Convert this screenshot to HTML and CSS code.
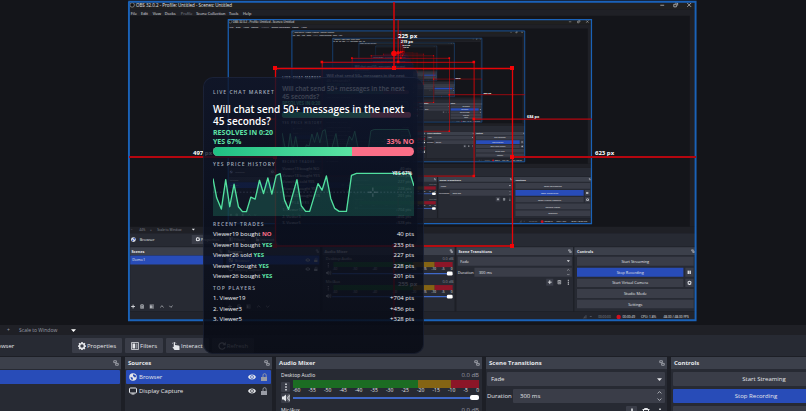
FILE: index.html
```html
<!DOCTYPE html>
<html lang="en">
<head>
<meta charset="utf-8">
<title>OBS Studio</title>
<link rel="stylesheet" href="styles.css">
</head>
<body>
<svg class="defs" aria-hidden="true">
  <defs>
    <symbol id="i-gear" viewBox="0 0 16 16"><path fill="currentColor" fill-rule="evenodd" d="M6.600 0h2.800l.5 2 1.300.6L13 1.500l1.800 1.800-1 1.800.5 1.300 1.700.5v2.600l-1.800.5-.5 1.400 1 1.700-1.900 1.900-1.700-1-1.300.5-.5 2H6.600l-.5-2-1.300-.5-1.800 1-1.900-1.900 1-1.700-.5-1.400L0 9.500V6.900l1.700-.5.5-1.300-1-1.800L3 1.500l1.800 1.100L6.100 2zM8 4.600a3.400 3.400 0 1 0 0 6.800 3.400 3.400 0 0 0 0-6.800z"/></symbol>
    <symbol id="i-filter" viewBox="0 0 16 16"><path fill="none" stroke="currentColor" stroke-width="1.500" d="M1 1h14v14H1z"/><path fill="currentColor" d="M3 3h5v10H3z"/><path fill="currentColor" opacity=".45" d="M9 3h4v10H9z"/></symbol>
    <symbol id="i-hand" viewBox="0 0 16 16"><path fill="currentColor" d="M4.500 0a1.500 1.500 0 0 1 1.500 1.500V6l7 1.200c1.200.2 2 1 2 2V16H5L1 10.500l1-1 1.500 1V1.500A1.500 1.500 0 0 1 4.500 0z"/><path fill="none" stroke="currentColor" d="M1 4a4 4 0 0 1 1-3M8 4a4 4 0 0 0-1-3"/></symbol>
    <symbol id="i-refresh" viewBox="0 0 16 16"><path fill="none" stroke="currentColor" stroke-width="2.200" d="M14 10.500A6.300 6.300 0 1 1 12.500 3.500"/><path fill="currentColor" d="M15.500 0v6.500H9z"/></symbol>
    <symbol id="i-dock" viewBox="0 0 16 16"><path fill="none" stroke="currentColor" stroke-width="2" d="M2 2h7v5H2zM7 9h7v5H7z"/></symbol>
    <symbol id="i-globe" viewBox="0 0 16 16"><circle cx="8" cy="8" r="7.500" fill="currentColor"/><path fill="var(--globe-land)" d="M8 2.500l5 1.500 1 4-3 1-1-2-2-.5zM3 8l4 1 1 3-1.500 2L4 12z"/></symbol>
    <symbol id="i-screen" viewBox="0 0 16 16"><rect x="1" y="2" width="14" height="10" rx="2" fill="none" stroke="currentColor" stroke-width="2"/><path fill="currentColor" d="M5 13h6v2H5z"/></symbol>
    <symbol id="i-eye" viewBox="0 0 16 16"><path fill="currentColor" fill-rule="evenodd" d="M0 8c2-3.500 5-5 8-5s6 1.500 8 5c-2 3.500-5 5-8 5s-6-1.500-8-5zm8-3.500a3.500 3.500 0 1 0 0 7 3.500 3.500 0 0 0 0-7z"/><circle cx="8" cy="8" r="2" fill="currentColor"/></symbol>
    <symbol id="i-lock" viewBox="0 0 16 16"><path fill="none" stroke="currentColor" stroke-width="1.800" d="M6 8V4.500a3.200 3.200 0 0 1 6.400 0V8"/><path fill="currentColor" d="M2 8h12v8H2z"/></symbol>
    <symbol id="i-dots" viewBox="0 0 16 16"><path fill="currentColor" d="M6.500 1h3v3h-3zM6.500 6.500h3v3h-3zM6.500 12h3v3h-3z"/></symbol>
    <symbol id="i-speaker" viewBox="0 0 16 16"><path fill="currentColor" d="M0 5h3l5-4v14l-5-4H0z"/><path fill="none" stroke="currentColor" stroke-width="1.600" d="M10 5q2 3 0 6M12 3q4 5 0 10M14 1q5 7 0 14"/></symbol>
    <symbol id="i-plus" viewBox="0 0 16 16"><path stroke="currentColor" stroke-width="3" d="M8 1v14M1 8h14"/></symbol>
    <symbol id="i-trash" viewBox="0 0 16 16"><path fill="none" stroke="currentColor" stroke-width="2" d="M1 3h14M5 2V1h6v1M3 4v11h10V4M6.500 6v7M9.500 6v7"/></symbol>
    <symbol id="i-up" viewBox="0 0 16 16"><path fill="none" stroke="currentColor" stroke-width="2.200" d="M2 11l6-6 6 6"/></symbol>
    <symbol id="i-down" viewBox="0 0 16 16"><path fill="none" stroke="currentColor" stroke-width="2.200" d="M2 5l6 6 6-6"/></symbol>
    <symbol id="i-caret" viewBox="0 0 16 16"><path fill="currentColor" d="M0 4h16l-8 9z"/></symbol>
    <symbol id="i-pause" viewBox="0 0 16 16"><path fill="currentColor" d="M1 1h6v14H1zM9 1h6v14H9z"/></symbol>
    <linearGradient id="glass" x1="0" y1="0" x2="0" y2="1"><stop offset="0" stop-color="#101830"/><stop offset="1" stop-color="#080c18"/></linearGradient>
    <linearGradient id="yes"><stop offset="0" stop-color="#1fbf83"/><stop offset="1" stop-color="#5be3a3"/></linearGradient>
    <symbol id="chart" viewBox="39 290 601 133" preserveAspectRatio="none">
      <path fill="#34d399" fill-opacity=".2" d="M39 310L50 368 64 402 77 313 89 395 102 327 115 395 127 410H139L152 366 165 372 178 315 190 355 203 308 215 357 228 300 240 295 253 375 265 403 290 313 303 392 316 409H328L353 325 365 345 378 302 391 370 403 400 416 409H438L453 300 468 294H628L640 332V423H39z"/>
      <path fill="none" stroke="#9fb0c8" stroke-opacity=".3" stroke-width="2" stroke-dasharray="5 5" d="M39 351H640"/>
      <path fill="none" stroke="#aab4c4" stroke-opacity=".5" stroke-width="2" d="M517 337v10M517 355v10M503 351h10M521 351h10"/>
      <path fill="none" stroke="#52e09f" stroke-width="4" stroke-linejoin="round" d="M39 310L50 368 64 402 77 313 89 395 102 327 115 395 127 410H139L152 366 165 372 178 315 190 355 203 308 215 357 228 300 240 295 253 375 265 403 290 313 303 392 316 409H328L353 325 365 345 378 302 391 370 403 400 416 409H438L453 300 468 294H628L640 332"/>
    </symbol>

    <!-- Selection box with its spacing guides -->
    <g id="selection" fill="none">
      <path stroke="#b5060f" stroke-width="2" d="M129 157H275M512 157H696"/>
      <path stroke="#d90509" stroke-width="1.500" d="M394 2V68M394 246V320"/>
      <path stroke="#e80407" stroke-width="1.300" d="M275.500 68.500H512.500V246H275.500z"/>
      <path fill="#f40407" d="M273 66h4v4h-4zM510 66h4v4h-4zM392 66h4v4h-4zM273 244h4v4h-4zM510 244h4v4h-4zM392 244h4v4h-4zM273 155h4v4h-4zM510 155h4v4h-4z"/>
      <circle cx="394" cy="53.500" r="2.800" fill="#f40407"/>
    </g>
  </defs>
</svg>

<main class="app">
  <section class="stage" aria-label="Preview">
    <svg class="preview" viewBox="-27 0 886 325">
      <g transform="matrix(.641 0 0 .641 145.600 18.400)">
        <g id="window" class="shot">
          <path fill="#14151a" d="M-27-27H859V472H-27z"/>
          <path fill="#202020" d="M-27-27H859V-14H-27z"/>
          <path fill="#1f2026" d="M-27-14H859V-4H-27zM849-4H859V325H849z"/>
          <circle cx="-21" cy="-21" r="3.500" fill="#111" stroke="#aaa"/>
          <text x="-15" y="-18" class="caption">OBS 32.0.2 - Profile: Untitled - Scenes: Untitled</text>
          <path fill="none" stroke="#ddd" d="M803-20.500h6M824-22h4v4h-4zM826-24h4v4M845-24l6 6M851-24l-6 6"/>
          <text x="-23" y="-6">File</text><text x="-7" y="-6">Edit</text><text x="11" y="-6">View</text><text x="30" y="-6">Docks</text><text x="55" y="-6" class="off">Profile</text><text x="79" y="-6">Scene Collection</text><text x="130" y="-6">Tools</text><text x="152" y="-6">Help</text>
          <path fill="#1f2026" d="M-27 325H859V335H-27z"/>
          <path fill="#272a33" d="M-27 335H859V357H-27z"/>
          <path fill="#1d1f26" d="M-27 356H859V460H-27z"/>
          <path fill="#22242c" d="M-27 458H859V472H-27z"/>
          <g class="zoom"><text x="-23" y="332" class="off">−</text><text x="-10" y="332" class="off">44%</text><text x="7" y="332" class="off">+</text><text x="18" y="332" class="off">Scale to Window</text></g>
          <use href="#i-caret" x="72" y="327" width="5" height="5"/>
          <use href="#i-globe" x="-23" y="341" width="8" height="8"/><text x="-9" y="348">Browser</text>
          <path fill="#3a3d48" d="M72 338h49v14H72zM124 338h38v14h-38zM165 338h45v14h-45z"/>
          <use href="#i-gear" x="78" y="341" width="7" height="7"/><text x="86" y="348">Properties</text><use href="#i-filter" x="130" y="341" width="7" height="7"/><text x="138" y="348">Filters</text><use href="#i-hand" x="171" y="341" width="7" height="7"/><text x="179" y="348">Interact</text>
          <path fill="#272a33" d="M-24 357H121V457H-24zM125 357H272V457H125zM276 357H482V457H276zM485 357H667V457H485zM669 357H859V457H669z"/>
          <path fill="#3c404b" d="M-24 357H121V369H-24zM125 357H272V369H125zM276 357H482V369H276zM485 357H667V369H485zM669 357H859V369H669z"/>
          <g class="strong"><text x="-22" y="366">Scenes</text><text x="128" y="366">Sources</text><text x="279" y="366">Audio Mixer</text><text x="488" y="366">Scene Transitions</text><text x="673" y="366">Controls</text></g>
          <use href="#i-dock" x="114" y="360" width="6" height="6"/><use href="#i-dock" x="265" y="360" width="6" height="6"/><use href="#i-dock" x="474" y="360" width="6" height="6"/><use href="#i-dock" x="659" y="360" width="6" height="6"/><use href="#i-dock" x="851" y="360" width="6" height="6"/>
          <path fill="#284cb8" d="M-24 370H121V384H-24zM126 370H271V384H126z"/>
          <text x="-21" y="379">Demo1</text>
          <use href="#i-globe" x="129" y="373" width="8" height="8"/><text x="139" y="380">Browser</text>
          <use href="#i-screen" x="129" y="387" width="8" height="8"/><text x="139" y="394">Display Capture</text>
          <use href="#i-eye" x="249" y="373" width="8" height="8"/><use href="#i-eye" x="249" y="387" width="8" height="8"/><use href="#i-lock" x="262" y="373" width="7" height="7"/><use href="#i-lock" x="262" y="387" width="7" height="7"/>
          <g id="shot-tools"><use href="#i-plus" x="-23" y="446" width="7" height="7"/><use href="#i-trash" x="-9" y="446" width="7" height="7"/><use href="#i-filter" x="6" y="446" width="7" height="7"/><use href="#i-up" x="22" y="446" width="7" height="7"/><use href="#i-down" x="36" y="446" width="7" height="7"/></g>
          <use href="#shot-tools" x="151"/>
          <g id="channel"><text x="463" y="377" class="off">0.0 dB</text>
            <path fill="#1c6c23" d="M293 380H417V388H293z"/><path fill="#846414" d="M417 380H451V388H417z"/><path fill="#8c1628" d="M451 380H479V388H451z"/>
            <use href="#i-dots" x="281" y="381" width="8" height="8"/><use href="#i-speaker" x="281" y="393" width="9" height="8"/>
            <text x="292" y="393" class="tick">-60</text><text x="323" y="393" class="tick">-50</text><text x="354" y="393" class="tick">-40</text><text x="385" y="393" class="tick">-30</text><text x="415" y="393" class="tick">-20</text><text x="431" y="393" class="tick">-15</text><text x="446" y="393" class="tick">-10</text><text x="462" y="393" class="tick">-5</text><text x="476" y="393" class="tick">0</text>
            <path stroke="#3f68c8" stroke-width="2" d="M291 398H470"/><rect x="470" y="395" width="9" height="6" rx="2" fill="#fff"/></g>
          <use href="#channel" y="36"/><text x="281" y="377">Desktop Audio</text><text x="281" y="413">Mic/Aux</text>
          <path fill="#3a3d48" d="M487 372H665V386H487zM513 389H665V403H513zM625 406h11v11h-11z"/>
          <text x="491" y="382">Fade</text><text x="487" y="399">Duration</text><text x="520" y="399">300 ms</text>
          <use href="#i-caret" x="657" y="376" width="5" height="5"/><use href="#i-up" x="657" y="390" width="5" height="5"/><use href="#i-down" x="657" y="397" width="5" height="5"/>
          <use href="#i-plus" x="627" y="408" width="7" height="7"/><use href="#i-trash" x="642" y="408" width="7" height="7"/><use href="#i-dots" x="655" y="407" width="9" height="9"/>
          <path fill="#3a3d48" d="M673 372H855V386H673zM842 389h13v14h-13zM673 406H839V419H673zM842 406h13v13h-13zM673 422H855V436H673zM673 439H855V452H673z"/>
          <path fill="#284cb8" d="M673 389H839V403H673z"/>
          <g text-anchor="middle"><text x="764" y="382">Start Streaming</text><text x="756" y="399">Stop Recording</text><text x="756" y="415">Start Virtual Camera</text><text x="764" y="432">Studio Mode</text><text x="764" y="448">Settings</text></g>
          <use href="#i-pause" x="845" y="393" width="6" height="6"/><use href="#i-gear" x="845" y="409" width="7" height="7"/>
          <path stroke="#666b77" d="M683 468v-1M685 468v-3M687 468v-5M693 465h3"/>
          <circle cx="738" cy="466" r="3.500" fill="#cf1020"/>
          <g class="status"><text x="706" y="468" class="off">00:00:00</text><text x="744" y="468">00:00:49</text><text x="773" y="468">CPU: 1.8%</text><text x="808" y="468">48.00 / 48.00 FPS</text></g>
          <path fill="none" stroke="#1a62b8" stroke-width="3" d="M-27-26H858V471H-26V-26"/>
        </g>
        <g transform="matrix(.641 0 0 .641 145.600 18.400)">
          <use href="#window"/>
          <g transform="matrix(.641 0 0 .641 145.600 18.400)">
            <use href="#window"/>
            <g transform="matrix(.641 0 0 .641 145.600 18.400)">
              <use href="#window"/>
              <g transform="matrix(.641 0 0 .641 145.600 18.400)">
                <use href="#window"/>
                <g transform="matrix(.641 0 0 .641 145.600 18.400)"><use href="#window"/><use href="#selection"/><use href="#market"/></g>
                <use href="#selection"/><use href="#market"/>
              </g>
              <use href="#selection"/><use href="#market"/><text x="595" y="155" class="px">458 px</text>
            </g>
            <use href="#selection"/><use href="#market"/><text x="595" y="155" class="px">568 px</text><text x="398" y="38" class="px">215 px</text>
          </g>
          <use href="#selection"/><use href="#market"/><text x="595" y="155" class="px">655 px</text><text x="398" y="38" class="px">218 px</text>
        </g>
        <use href="#selection"/>
        <g id="market">
          <rect x="203" y="77" width="221" height="277" rx="10" fill="url(#glass)" fill-opacity=".82" stroke="#26304a" stroke-opacity=".6"/>
          <g class="m-label"><text x="213" y="94">LIVE CHAT MARKET</text><text x="213" y="165">YES PRICE HISTORY</text><text x="213" y="225">RECENT TRADES</text><text x="213" y="289">TOP PLAYERS</text></g>
          <g class="m-title"><text x="213" y="113">Will chat send 50+ messages in the next</text><text x="213" y="125">45 seconds?</text></g>
          <g class="m-odds"><text x="213" y="135">RESOLVES IN 0:20</text></g>
          <rect x="213" y="146" width="201" height="9" rx="4" fill="#fb6f88"/><path fill="url(#yes)" d="M217 146H351V155H217a4 4 0 0 1 0-9z"/>
          <use href="#chart" x="213" y="172" width="201" height="44"/>
          <g class="m-row"><text x="213" y="237">Viewer19 bought NO</text><text x="213" y="247">Viewer18 bought YES</text><text x="213" y="257">Viewer26 sold YES</text><text x="213" y="268">Viewer7 bought YES</text><text x="213" y="278">Viewer26 bought YES</text><text x="213" y="300">1. Viewer19</text><text x="213" y="311">2. Viewer3</text><text x="213" y="321">3. Viewer5</text></g>
          <g class="m-row" text-anchor="end"><text x="414" y="237">40 pts</text><text x="414" y="247">233 pts</text><text x="414" y="257">227 pts</text><text x="414" y="268">228 pts</text><text x="414" y="278">201 pts</text><text x="414" y="300">+704 pts</text><text x="414" y="311">+456 pts</text><text x="414" y="321">+328 pts</text></g>
        </g>
        <text x="595" y="155" class="px">684 px</text><text x="398" y="38" class="px">219 px</text>
      </g>
      <use href="#selection"/>
      <g class="px"><text x="398" y="38">225 px</text><text x="193" y="155">497 px</text><text x="595" y="155">623 px</text><text x="398" y="286">255 px</text></g>
    </svg>
  </section>

  <div class="zoombar">
    <span>−</span><span class="level">44%</span><span>+</span>
    <button class="scale" type="button">Scale to Window <svg><use href="#i-caret"/></svg></button>
  </div>

  <div class="context">
    <span class="source"><svg><use href="#i-globe"/></svg>Browser</span>
    <button type="button"><svg><use href="#i-gear"/></svg>Properties</button>
    <button type="button"><svg><use href="#i-filter"/></svg>Filters</button>
    <button type="button"><svg><use href="#i-hand"/></svg>Interact</button>
    <button type="button"><svg><use href="#i-refresh"/></svg>Refresh</button>
  </div>

  <div class="docks">
    <section class="dock">
      <h2>Scenes<svg><use href="#i-dock"/></svg></h2>
      <ul><li class="selected">Demo1</li></ul>
    </section>
    <section class="dock">
      <h2>Sources<svg><use href="#i-dock"/></svg></h2>
      <ul>
        <li class="selected"><svg><use href="#i-globe"/></svg><span>Browser</span><svg><use href="#i-eye"/></svg><svg class="lock"><use href="#i-lock"/></svg></li>
        <li><svg><use href="#i-screen"/></svg><span>Display Capture</span><svg><use href="#i-eye"/></svg><svg class="lock"><use href="#i-lock"/></svg></li>
      </ul>
    </section>
    <section class="dock">
      <h2>Audio Mixer<svg><use href="#i-dock"/></svg></h2>
      <div class="mixer">
        <div class="names"><label for="vol">Desktop Audio</label><output>0.0 dB</output></div>
        <div class="channel">
          <button type="button" aria-label="Options"><svg><use href="#i-dots"/></svg></button>
          <div class="levels">
            <div class="meter"></div>
            <div class="ticks"><span>-60</span><span>-55</span><span>-50</span><span>-45</span><span>-40</span><span>-35</span><span>-30</span><span>-25</span><span>-20</span><span>-15</span><span>-10</span><span>-5</span><span>0</span></div>
          </div>
          <button type="button" aria-label="Mute"><svg><use href="#i-speaker"/></svg></button>
          <input id="vol" type="range" min="0" max="100" value="100">
        </div>
        <div class="names second"><span>Mic/Aux</span><output>0.0 dB</output></div>
      </div>
    </section>
    <section class="dock">
      <h2>Scene Transitions<svg><use href="#i-dock"/></svg></h2>
      <div class="transitions">
        <div class="field"><select aria-label="Transition"><option>Fade</option></select><svg><use href="#i-caret"/></svg></div>
        <div class="duration"><label for="dur">Duration</label>
          <div class="field"><input id="dur" type="text" value="300 ms"><span class="spin"><svg><use href="#i-up"/></svg><svg><use href="#i-down"/></svg></span></div></div>
        <div class="tools"><button type="button" aria-label="Add"><svg><use href="#i-plus"/></svg></button><button type="button" aria-label="Remove"><svg><use href="#i-trash"/></svg></button><button type="button" aria-label="More"><svg><use href="#i-dots"/></svg></button></div>
      </div>
    </section>
    <section class="dock">
      <h2>Controls<svg><use href="#i-dock"/></svg></h2>
      <div class="controls">
        <button class="wide" type="button">Start Streaming</button>
        <button class="active" type="button">Stop Recording</button><button type="button" aria-label="Pause"><svg><use href="#i-pause"/></svg></button>
        <button type="button">Start Virtual Camera</button><button type="button" aria-label="Configure"><svg><use href="#i-gear"/></svg></button>
      </div>
    </section>
  </div>

  <aside class="card">
    <h3>LIVE CHAT MARKET</h3>
    <h1>Will chat send 50+ messages in the next 45 seconds?</h1>
    <p class="odds yes">RESOLVES IN 0:20</p>
    <p class="odds"><span class="yes">YES 67%</span><span class="no">33% NO</span></p>
    <div class="bar"><div class="fill"></div></div>
    <h3>YES PRICE HISTORY</h3>
    <div class="history"><svg preserveAspectRatio="none"><use href="#chart"/></svg><span>YES 67%</span></div>
    <h3>RECENT TRADES</h3>
    <ul class="trades">
      <li><span>Viewer19 bought <b class="no">NO</b></span><span>40 pts</span></li>
      <li><span>Viewer18 bought <b class="yes">YES</b></span><span>233 pts</span></li>
      <li><span>Viewer26 sold <b class="yes">YES</b></span><span>227 pts</span></li>
      <li><span>Viewer7 bought <b class="yes">YES</b></span><span>228 pts</span></li>
      <li><span>Viewer26 bought <b class="yes">YES</b></span><span>201 pts</span></li>
    </ul>
    <h3>TOP PLAYERS</h3>
    <ul class="players">
      <li><span>1. Viewer19</span><span>+704 pts</span></li>
      <li><span>2. Viewer3</span><span>+456 pts</span></li>
      <li><span>3. Viewer5</span><span>+328 pts</span></li>
    </ul>
  </aside>
</main>
</body>
</html>
```

FILE: styles.css
```css
:root {
  --base: #1d1f26;
  --panel: #272a33;
  --raised: #3a3d48;
  --title: #3c404b;
  --accent: #284cb8;
  --globe-land: #284cb8;
  --yes: #5fe3a7;
  --no: #fb6f88;
}

* { box-sizing: border-box; }

body {
  margin: 0;
  height: 100vh;
  overflow: hidden;
  background: var(--base);
  color: #e4e6ea;
  font: 6px/10px "Open Sans", "Noto Sans", sans-serif;
}

h1, h2, h3, p, ul { margin: 0; padding: 0; }
ul { list-style: none; }
svg { width: 8px; height: 8px; flex: none; }
.defs { position: absolute; width: 0; height: 0; }

button, input, select {
  font: inherit;
  color: inherit;
  border: 0;
  border-radius: 1px;
  background: var(--raised);
  padding: 0;
  margin: 0;
}

/* The window runs past both sides of the viewport */
.app {
  position: relative;
  height: 100vh;
  overflow: hidden;
  margin: 0 -53px 0 -27px;
}

.stage { background: #14151a; }
.preview { display: block; width: 100%; height: 325px; }

.preview text { fill: #e4e6ea; font-size: 6px; }
.preview text.caption { font-size: 7px; }
.preview .off { fill: #858993; }
.preview .strong text { font-weight: 700; }
.preview .zoom text, .preview .status text { font-size: 5px; }
.preview text.tick { font-size: 5px; }
.preview text.px, .preview .px text { fill: #fff; font-weight: 700; }
.preview .m-label text { fill: #a4acbc; font-size: 5px; font-weight: 600; letter-spacing: 1px; }
.preview .m-title text { fill: #fff; font-size: 10px; font-weight: 600; }
.preview .m-odds text { fill: #5fe3a7; font-size: 7px; font-weight: 700; }

.zoombar {
  display: flex;
  align-items: center;
  height: 10px;
  padding-left: 5px;
  background: #1f2026;
  color: #9a9da6;
  font-size: 5px;
}
.zoombar span { width: 12px; }
.zoombar .level { width: 17px; }
.zoombar .scale { display: flex; align-items: center; gap: 14px; background: none; }
.zoombar svg { width: 5px; height: 5px; color: #fff; }

.context {
  display: flex;
  align-items: center;
  gap: 3px;
  height: 21px;
  padding-left: 4px;
  background: var(--panel);
}
.context .source { display: flex; align-items: center; gap: 6px; width: 92px; }
.context button { display: flex; align-items: center; gap: 1px; height: 15px; padding: 0 6px; }

.docks {
  display: grid;
  grid-template-columns: 145fr 147fr 206fr 181fr 188fr;
  gap: 4px;
  padding: 1px 0 0 3px;
}
.dock { background: var(--panel); height: 100px; min-width: 0; }
.dock h2 {
  display: flex;
  align-items: center;
  justify-content: space-between;
  height: 12px;
  padding: 0 2px 0 3px;
  background: var(--title);
  font-size: 6px;
  font-weight: 700;
}
.dock h2 svg { width: 6px; height: 6px; color: #b4b7bf; }

.dock ul { padding: 1px; }
.dock li { display: flex; align-items: center; gap: 2px; height: 14px; padding: 0 3px; }
.dock li span { flex: 1; }
.dock li.selected { background: var(--accent); border-radius: 1px; }
.dock li .lock { color: #9a9da6; margin-left: 2px; }

.mixer { padding: 2px 3px 0 5px; }
.names { display: flex; justify-content: space-between; height: 9px; line-height: 9px; font-size: 5px; }
.names output { color: #9a9da6; font-size: 6px; }
.channel { display: grid; grid-template-columns: 9px 1fr; column-gap: 3px; align-items: center; }
.channel button { display: grid; place-items: center; height: 10px; }
.meter {
  height: 8px;
  background: linear-gradient(90deg, #1c6c23 67%, #846414 67% 85%, #8c1628 85%);
}
.ticks { display: flex; justify-content: space-between; height: 5px; line-height: 5px; font-size: 5px; }
.second { margin-top: 3px; }

input[type="range"] { appearance: none; width: 100%; height: 8px; background: none; }
input[type="range"]::-webkit-slider-runnable-track { height: 2px; background: #3f68c8; }
input[type="range"]::-webkit-slider-thumb { appearance: none; width: 9px; height: 5px; margin-top: -2px; border-radius: 2px; background: #fff; }

.transitions { display: grid; gap: 3px; padding: 3px 2px 0 1px; }
.field { display: flex; align-items: center; flex: 1; height: 14px; padding-right: 3px; background: var(--raised); border-radius: 1px; }
.field svg { width: 5px; height: 5px; }
.field select, .field input { appearance: none; flex: 1; min-width: 0; height: 14px; padding: 0 4px; background: none; }
.field input { padding-left: 7px; }
.spin { display: grid; gap: 2px; }
.duration { display: flex; align-items: center; }
.duration label { width: 26px; }
.tools { display: flex; justify-content: flex-end; gap: 3px; }
.tools button { display: grid; place-items: center; width: 11px; height: 11px; }
.tools button + button { background: none; }

.controls { display: grid; grid-template-columns: 1fr 13px; gap: 3px; padding: 3px 4px 0 2px; }
.controls button { display: grid; place-items: center; height: 14px; }
.controls .wide { grid-column: span 2; }
.controls .active { background: var(--accent); }
.controls svg { width: 7px; height: 7px; }

/* Market overlay floating over the window */
.card {
  position: absolute;
  top: 77px;
  left: calc(50% - 213px);
  width: 221px;
  height: 277px;
  padding: 10px;
  border-radius: 10px;
  background: linear-gradient(rgba(15, 22, 43, .8), rgba(7, 10, 20, .86));
  box-shadow: inset 0 0 0 1px rgba(60, 72, 104, .25);
  color: #f1f3f7;
}
.card h3 { height: 10px; color: #a4acbc; font-size: 5px; font-weight: 600; letter-spacing: 1px; }
.card h1 { margin-top: 6px; color: #fff; font-size: 10px; line-height: 12px; font-weight: 600; }
.card h1 + p { margin-top: 1px; }
.odds { display: flex; justify-content: space-between; height: 9px; font-size: 7px; line-height: 9px; font-weight: 700; }
.yes { color: var(--yes); }
.no { color: var(--no); }
.bar { height: 9px; margin: 1px 0 3px; border-radius: 5px; overflow: hidden; background: var(--no); }
.fill { width: 69%; height: 100%; background: linear-gradient(90deg, #1fbf83, #5be3a3); }
.history { position: relative; height: 44px; margin: 3px 0; }
.history svg { display: block; width: 100%; height: 100%; }
.history span { position: absolute; top: -4px; right: 2px; font-size: 5px; font-weight: 600; color: #fff; }
.card ul { display: grid; align-content: space-between; margin-bottom: 2px; }
.card li { display: flex; justify-content: space-between; height: 10px; font-weight: 500; }
.card .trades { height: 52px; }
.card .players { height: 31px; }
```
